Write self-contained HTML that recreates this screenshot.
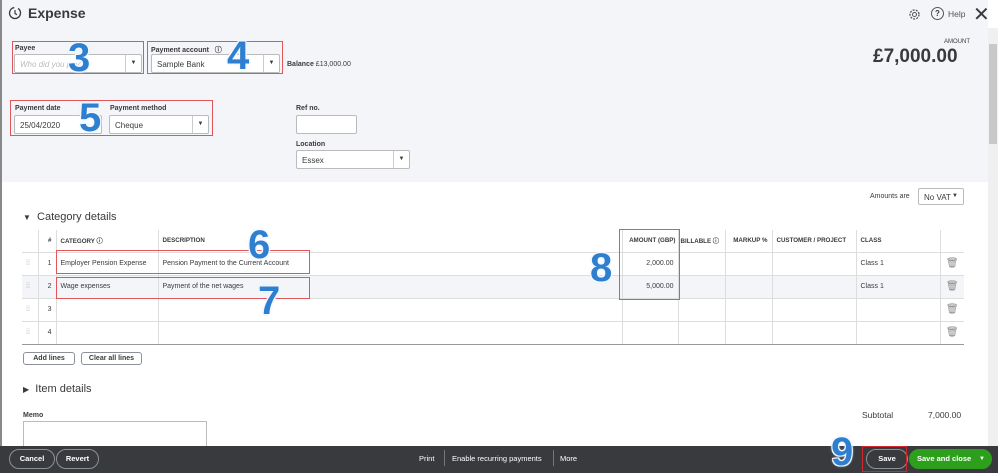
<!DOCTYPE html>
<html><head><style>
*{box-sizing:border-box;margin:0;padding:0}
body{width:998px;height:473px;overflow:hidden;font-family:"Liberation Sans",sans-serif;color:#393a3d;background:#fff;position:relative;font-size:8px}
.a{position:absolute}
.top{left:0;top:0;width:988px;height:182px;background:#f4f5f8}
.lbl{font-size:7px;font-weight:bold;color:#393a3d}
.inp{background:#fff;border:1px solid #bbb;border-radius:2px;height:19px;font-size:8px;padding:5px 5px;color:#393a3d}
.dd{position:absolute;right:0;top:0;width:16px;height:17px;border-left:1px solid #ccc;font-size:6px;text-align:center;line-height:17px}
.red{border:1.3px solid #e0565b;z-index:5}
.num{font-family:"Liberation Sans",sans-serif;font-weight:bold;color:#2f7fd0;font-size:40px;line-height:40px;z-index:6;text-shadow:0 0 2px #fff,0 0 3px #cfe6ff,1px 1px 0 #fff,-1px -1px 0 #fff,1px -1px 0 #fff,-1px 1px 0 #fff}
table{border-collapse:collapse;position:absolute;left:22px;top:230px;width:942px;font-size:7px;table-layout:fixed}
td{border-right:1px solid #ddd;border-bottom:1px solid #ddd;height:23px;padding:0 4px;white-space:nowrap;overflow:hidden}
td:last-child{border-right:none}
tr.h td{font-weight:bold;height:22px;font-size:6.2px}
tr.g td{background:#f4f5f8}
.btn{border:1px solid #8d9096;border-radius:3px;background:#fff;font-size:7px;font-weight:bold;text-align:center;line-height:11px;height:13px}
.foot{left:0;top:446px;width:998px;height:27px;background:#393a3d}
.fb{border:1px solid #8d9096;border-radius:12px;color:#fff;font-size:7.5px;font-weight:bold;height:20px;line-height:18px;text-align:center;top:449px}
.tr{text-align:center;color:#888;font-size:10px}
</style></head><body>
<div class="a top"></div>
<div class="a" style="left:988px;top:28px;width:10px;height:418px;background:#f0f0f0"></div>
<div class="a" style="left:989px;top:44px;width:8px;height:100px;background:#c8c8c8"></div>
<div class="a" style="left:0;top:0;width:2px;height:473px;background:#888"></div>
<svg class="a" style="left:8px;top:6px" width="14" height="14" viewBox="0 0 14 14"><circle cx="7" cy="7" r="5.5" fill="none" stroke="#393a3d" stroke-width="1.3" stroke-dasharray="25 4"/><path d="M7 4v3.5l2 1.2" fill="none" stroke="#393a3d" stroke-width="1.2"/></svg>
<div class="a" style="left:28px;top:5px;font-size:14px;font-weight:bold">Expense</div>
<svg class="a" style="left:908px;top:8px" width="13" height="13" viewBox="0 0 13 13"><circle cx="6.5" cy="6.5" r="4.5" fill="none" stroke="#555" stroke-width="1.3" stroke-dasharray="2 1.2"/><circle cx="6.5" cy="6.5" r="2" fill="none" stroke="#555"/></svg>
<div class="a" style="left:931px;top:7px;width:13px;height:13px;border:1.2px solid #555;border-radius:50%;font-size:8px;font-weight:bold;text-align:center;line-height:11px">?</div>
<div class="a" style="left:948px;top:9px;font-size:8.5px;color:#555">Help</div>
<div class="a" style="left:973px;top:2px;font-size:20px;color:#393a3d">✕</div>
<div class="a" style="left:944px;top:39px;font-size:6px">AMOUNT</div>
<div class="a" style="left:873px;top:46px;font-size:19px;font-weight:bold">£7,000.00</div>

<div class="a red" style="left:12px;top:41px;width:132px;height:33px"></div>
<div class="a lbl" style="left:15px;top:45px">Payee</div>
<div class="a inp" style="left:14px;top:54px;width:128px;color:#bbb;font-style:italic">Who did you pay?<div class="dd" style="color:#393a3d">▼</div></div>
<div class="a red" style="left:147px;top:41px;width:136px;height:33px"></div>
<div class="a lbl" style="left:151px;top:45px">Payment account &nbsp;&nbsp;ⓘ</div>
<div class="a inp" style="left:151px;top:54px;width:129px">Sample Bank<div class="dd">▼</div></div>
<div class="a" style="left:287px;top:61px;font-size:7px"><b>Balance</b> £13,000.00</div>

<div class="a red" style="left:10px;top:100px;width:203px;height:36px"></div>
<div class="a lbl" style="left:15px;top:105px">Payment date</div>
<div class="a inp" style="left:14px;top:115px;width:88px">25/04/2020</div>
<div class="a lbl" style="left:110px;top:105px">Payment method</div>
<div class="a inp" style="left:109px;top:115px;width:100px">Cheque<div class="dd">▼</div></div>
<div class="a lbl" style="left:296px;top:105px">Ref no.</div>
<div class="a inp" style="left:296px;top:115px;width:61px"></div>
<div class="a lbl" style="left:296px;top:141px">Location</div>
<div class="a inp" style="left:296px;top:150px;width:114px">Essex<div class="dd">▼</div></div>

<div class="a num" style="left:68px;top:38px">3</div>
<div class="a num" style="left:227px;top:36px">4</div>
<div class="a num" style="left:79px;top:98px">5</div>

<div class="a" style="left:870px;top:193px;font-size:7px">Amounts are</div>
<div class="a inp" style="left:918px;top:188px;width:46px;height:17px;padding:4px 5px">No VAT <span style="float:right;font-size:6px">▼</span></div>

<div class="a" style="left:23px;top:211px;font-size:11px"><span style="font-size:8px">▼</span>&nbsp; Category details</div>

<table>
<colgroup><col style="width:16px"><col style="width:18px"><col style="width:102px"><col style="width:464px"><col style="width:56px"><col style="width:47px"><col style="width:47px"><col style="width:84px"><col style="width:84px"><col></colgroup>
<tr class="h"><td></td><td style="text-align:right">#</td><td>CATEGORY ⓘ</td><td>DESCRIPTION</td><td style="text-align:right;padding:0 2px">AMOUNT (GBP)</td><td style="padding:0 2px">BILLABLE ⓘ</td><td style="text-align:right">MARKUP %</td><td>CUSTOMER / PROJECT</td><td>CLASS</td><td></td></tr>
<tr><td style="color:#aaa">⁞⁞</td><td style="text-align:right">1</td><td>Employer Pension Expense</td><td>Pension Payment to the Current Account</td><td style="text-align:right">2,000.00</td><td></td><td></td><td></td><td>Class 1</td><td class="tr">🗑</td></tr>
<tr class="g"><td style="color:#aaa">⁞⁞</td><td style="text-align:right">2</td><td>Wage expenses</td><td>Payment of the net wages</td><td style="text-align:right">5,000.00</td><td></td><td></td><td></td><td>Class 1</td><td class="tr">🗑</td></tr>
<tr><td style="color:#aaa">⁞⁞</td><td style="text-align:right">3</td><td></td><td></td><td></td><td></td><td></td><td></td><td></td><td class="tr">🗑</td></tr>
<tr><td style="color:#aaa;border-bottom:1.5px solid #999">⁞⁞</td><td style="text-align:right;border-bottom:1.5px solid #999">4</td><td style="border-bottom:1.5px solid #999"></td><td style="border-bottom:1.5px solid #999"></td><td style="border-bottom:1.5px solid #999"></td><td style="border-bottom:1.5px solid #999"></td><td style="border-bottom:1.5px solid #999"></td><td style="border-bottom:1.5px solid #999"></td><td style="border-bottom:1.5px solid #999"></td><td class="tr" style="border-bottom:1.5px solid #999">🗑</td></tr>
</table>
<div class="a red" style="left:56px;top:250px;width:254px;height:24px"></div>
<div class="a red" style="left:56px;top:277px;width:254px;height:22px"></div>
<div class="a red" style="left:619px;top:229px;width:61px;height:71px"></div>
<div class="a num" style="left:248px;top:225px">6</div>
<div class="a num" style="left:258px;top:281px">7</div>
<div class="a num" style="left:590px;top:248px">8</div>

<div class="a btn" style="left:23px;top:352px;width:52px">Add lines</div>
<div class="a btn" style="left:81px;top:352px;width:61px">Clear all lines</div>
<div class="a" style="left:23px;top:383px;font-size:11px"><span style="font-size:8px">▶</span>&nbsp; Item details</div>
<div class="a lbl" style="left:23px;top:412px">Memo</div>
<div class="a" style="left:23px;top:421px;width:184px;height:30px;border:1px solid #bbb;background:#fff"></div>
<div class="a" style="left:862px;top:410px;font-size:8.5px">Subtotal</div>
<div class="a" style="left:928px;top:410px;font-size:8.5px">7,000.00</div>

<div class="a foot"></div>
<div class="a fb" style="left:9px;width:46px">Cancel</div>
<div class="a fb" style="left:56px;width:43px">Revert</div>
<div class="a" style="left:419px;top:454px;color:#fff;font-size:7.5px">Print</div>
<div class="a" style="left:444px;top:450px;width:1px;height:16px;background:#777"></div>
<div class="a" style="left:452px;top:454px;color:#fff;font-size:7.5px">Enable recurring payments</div>
<div class="a" style="left:553px;top:450px;width:1px;height:16px;background:#777"></div>
<div class="a" style="left:560px;top:454px;color:#fff;font-size:7.5px">More</div>
<div class="a fb" style="left:866px;width:42px">Save</div>
<div class="a" style="left:862px;top:446px;width:45px;height:26px;border:1.3px solid #d0262e"></div>
<div class="a fb" style="left:909px;width:83px;background:#2ca01c;border-color:#2ca01c;text-align:left;padding-left:7px">Save and close <span style="float:right;margin-right:6px;font-size:6px">▼</span></div>
<div class="a num" style="left:831px;top:432px">9</div>
</body></html>
